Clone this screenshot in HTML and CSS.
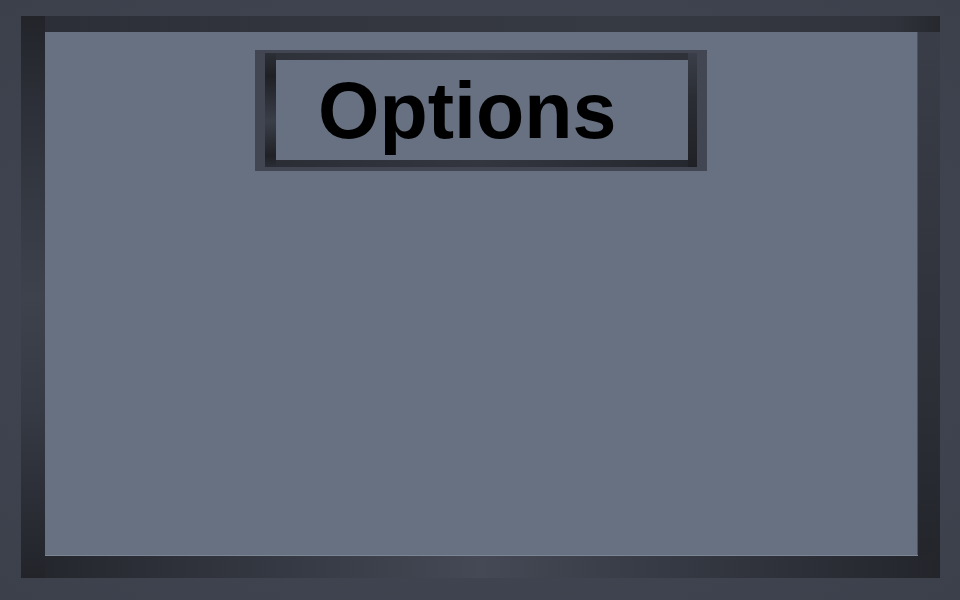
FILE: index.html
```html
<!DOCTYPE html>
<html>
<head>
<meta charset="utf-8">
<link rel="stylesheet" href="styles.css">
</head>
<body>
<div class="frame">
  <div class="panel">
    <div class="title-box">
      <div class="title-inner">
        <div class="title-face">Options</div>
      </div>
    </div>
  </div>
</div>
</body>
</html>
```
FILE: styles.css
```css
html, body {
  margin: 0;
  padding: 0;
}
body {
  width: 960px;
  height: 600px;
  overflow: hidden;
  background: radial-gradient(ellipse at 50% 50%, #454a56 0%, #3f4450 60%, #3b404b 100%);
  padding: 16px 0 0 21px;
  box-sizing: border-box;
  font-family: "Liberation Sans", Arial, sans-serif;
}
.frame {
  width: 919px;
  height: 562px;
  box-sizing: border-box;
  padding: 16px 22px 22px 24px;
  background-color: #2c2f37;
  background-image:
    linear-gradient(to bottom, #22242a 0%, #2c2f37 15%, #3d424d 50%, #363a44 70%, #22242a 100%),
    linear-gradient(to right, #2b2e36 0%, #33363f 35%, #363a43 65%, #30333b 95%, #26282e 100%),
    linear-gradient(to right, #23252b 0%, #363a44 30%, #444955 50%, #363a44 70%, #23252b 100%),
    linear-gradient(to bottom, #3a3e48 0%, #33363f 40%, #2b2e35 70%, #22242a 100%);
  background-size: 24px 100%, 100% 16px, 100% 22px, 22px 100%;
  background-position: top left, top left, bottom left, top right;
  background-repeat: no-repeat;
}
.panel {
  width: 100%;
  height: 100%;
  background: #677181;
  box-shadow: inset 0 -1px 0 #7b8594, inset -1px 0 0 #4b5260;
  padding: 18px 0 0 210px;
  box-sizing: border-box;
}
.title-box {
  width: 452px;
  height: 121px;
  box-sizing: border-box;
  padding: 3px 10px 4px 10px;
  background: #414652;
}
.title-inner {
  width: 100%;
  height: 100%;
  box-sizing: border-box;
  padding: 7px 9px 7px 11px;
  background-color: #2a2d34;
  background-image:
    linear-gradient(to bottom, #2c2f36 0%, #1e2025 20%, #3a3e48 60%, #1f2126 90%, #2a2d34 100%),
    linear-gradient(to bottom, #3a3e48 0%, #2a2d34 40%, #1f2126 100%),
    linear-gradient(to right, #2e3138 0%, #363a43 50%, #2e3138 100%),
    linear-gradient(to right, #2a2d34 0%, #33363f 50%, #24272d 100%);
  background-size: 11px 100%, 9px 100%, 100% 7px, 100% 7px;
  background-position: top left, top right, top left, bottom left;
  background-repeat: no-repeat;
}
.title-face {
  width: 100%;
  height: 100%;
  box-sizing: border-box;
  background: #677181;
  display: flex;
  align-items: center;
  padding-left: 42px;
  font-weight: bold;
  font-size: 79px;
  color: #000;
  line-height: 1;
}
```
